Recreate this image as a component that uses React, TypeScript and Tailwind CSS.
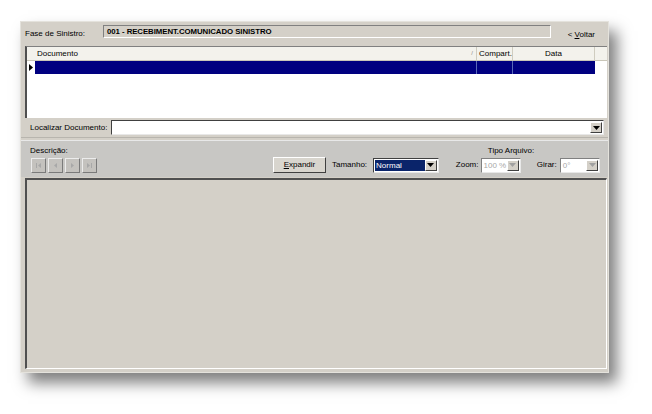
import React from "react";

const font = { fontFamily: '"Liberation Sans", Arial, sans-serif' };

function DropBtn({ disabled }: { disabled?: boolean }) {
  return (
    <div className="w-[12px] h-full bg-[#d4d0c8] border-t border-l border-t-white border-l-white border-b border-r border-b-[#404040] border-r-[#404040] flex items-center justify-center">
      <svg width="7" height="4" viewBox="0 0 7 4">
        <path d="M0 0h7L3.5 4z" fill={disabled ? "#a0a0a0" : "#000"} />
      </svg>
    </div>
  );
}

function NavBtn({ kind }: { kind: number }) {
  return (
    <div className="w-[15px] h-[15px] bg-[#c4c2be] border border-t-[#ececec] border-l-[#ececec] border-b-[#7a7a7a] border-r-[#7a7a7a] flex items-center justify-center">
      <svg width="7" height="7" viewBox="0 0 7 7" fill="#a8a8a8">
        {kind === 0 && (<><rect x="1" y="1" width="1" height="5" /><path d="M6 1v5L3 3.5z" /></>)}
        {kind === 1 && <path d="M5 1v5L2 3.5z" />}
        {kind === 2 && <path d="M2 1v5L5 3.5z" />}
        {kind === 3 && (<><rect x="5" y="1" width="1" height="5" /><path d="M1 1v5L4 3.5z" /></>)}
      </svg>
    </div>
  );
}

export default function App() {
  return (
    <div className="w-[652px] h-[414px] bg-white pl-[20px] pt-[21px] text-[8px] text-black" style={font}>
      <div className="w-[589px] h-[352px] bg-[#d4d0c8] border border-[#e4e2dc] shadow-[8px_10px_14px_rgba(0,0,0,0.5)] flex flex-col">
        {/* top row */}
        <div className="h-[24px] flex items-start pt-[3px] pl-[4px] pr-[13px]">
          <span className="w-[78px] mt-[3px]">Fase de Sinistro:</span>
          <div className="w-[448px] h-[13px] bg-[#d4d0c8] border-t border-l border-t-[#808080] border-l-[#808080] border-b border-r border-b-white border-r-white flex items-center pl-[3px] font-bold text-[7.8px] tracking-[-0.05px]">
            001 - RECEBIMENT.COMUNICADO SINISTRO
          </div>
          <span className="ml-auto mt-[4px]">&lt; <span className="underline">V</span>oltar</span>
        </div>
        {/* grid */}
        <div className="ml-[4px] mr-[1px] h-[72px] bg-white border-l-2 border-l-[#505050] border-t border-t-[#808080] flex flex-col">
          <div className="h-[14px] flex bg-[#f3f2ec] border-b border-b-[#c9c6b8]">
            <div className="w-[8px]" />
            <div className="w-[442px] pl-[2px] flex items-center justify-between pr-[3px] border-r border-r-[#cfccbf]">
              <span>Documento</span>
              <span className="text-[6px] text-[#888]">/</span>
            </div>
            <div className="w-[36px] flex items-center pl-[2px] border-r border-r-[#cfccbf]">Compart.</div>
            <div className="w-[82px] flex items-center justify-center border-r border-r-[#cfccbf]">Data</div>
          </div>
          <div className="h-[13px] flex">
            <div className="w-[8px] flex items-center justify-center">
              <svg width="4" height="7" viewBox="0 0 4 7"><path d="M0 0l4 3.5L0 7z" fill="#000" /></svg>
            </div>
            <div className="w-[442px] bg-[#000080] border-r border-r-[#5a6ab8]" />
            <div className="w-[36px] bg-[#000080] border-r border-r-[#5a6ab8]" />
            <div className="w-[82px] bg-[#000080]" />
          </div>
        </div>
        {/* localizar */}
        <div className="h-[20px] flex items-center pl-[9px] pr-[4px] border-b border-b-[#b8b5ae]">
          <span className="w-[81px]">Localizar Documento:</span>
          <div className="flex-1 h-[15px] bg-white border-t border-l border-t-[#404040] border-l-[#404040] border-b border-r border-b-[#e8e8e8] border-r-[#e8e8e8] flex justify-end p-[1px]">
            <DropBtn />
          </div>
        </div>
        {/* description panel */}
        <div className="mt-[2px] h-[37px] bg-[#c8c7c4] border-t border-t-[#e8e8e8] flex flex-col pl-[9px] pr-[8px] pt-[4px]">
          <div className="flex h-[10px]">
            <span>Descrição:</span>
            <span className="ml-[420px]">Tipo Arquivo:</span>
          </div>
          <div className="flex items-center mt-[2px] h-[16px]">
            <div className="flex gap-[2px] ml-[1px]">
              <NavBtn kind={0} />
              <NavBtn kind={1} />
              <NavBtn kind={2} />
              <NavBtn kind={3} />
            </div>
            <div className="ml-[176px] w-[54px] h-[16px] bg-[#d8d5ce] border border-t-white border-l-white border-b-[#404040] border-r-[#404040] flex items-center justify-center">
              <span><span className="underline">E</span>xpandir</span>
            </div>
            <span className="ml-[6px]">Tamanho:</span>
            <div className="ml-[6px] w-[67px] h-[15px] bg-white border-t border-l border-t-[#404040] border-l-[#404040] border-b border-r border-b-[#e8e8e8] border-r-[#e8e8e8] flex p-[1px]">
              <div className="flex-1 bg-[#0a246a] text-white pl-[1px] leading-[11px]">Normal</div>
              <DropBtn />
            </div>
            <span className="ml-[17px]">Zoom:</span>
            <div className="ml-[2px] w-[41px] h-[15px] bg-white border-t border-l border-t-[#808080] border-l-[#808080] border-b border-r border-b-[#e8e8e8] border-r-[#e8e8e8] flex p-[1px]">
              <div className="flex-1 text-[#a8a8a8] pl-[1px] leading-[11px]">100 %</div>
              <DropBtn disabled />
            </div>
            <span className="ml-[16px]">Girar:</span>
            <div className="ml-[3px] w-[41px] h-[15px] bg-white border-t border-l border-t-[#808080] border-l-[#808080] border-b border-r border-b-[#e8e8e8] border-r-[#e8e8e8] flex p-[1px]">
              <div className="flex-1 text-[#a8a8a8] pl-[1px] leading-[11px]">0°</div>
              <DropBtn disabled />
            </div>
          </div>
        </div>
        {/* bottom */}
        <div className="flex-1 ml-[4px] mr-[1px] mb-[3px] mt-[1px] bg-[#d4d0c8] border-t-2 border-l-2 border-t-[#505050] border-l-[#505050] border-b border-r border-b-white border-r-white" />
      </div>
    </div>
  );
}
